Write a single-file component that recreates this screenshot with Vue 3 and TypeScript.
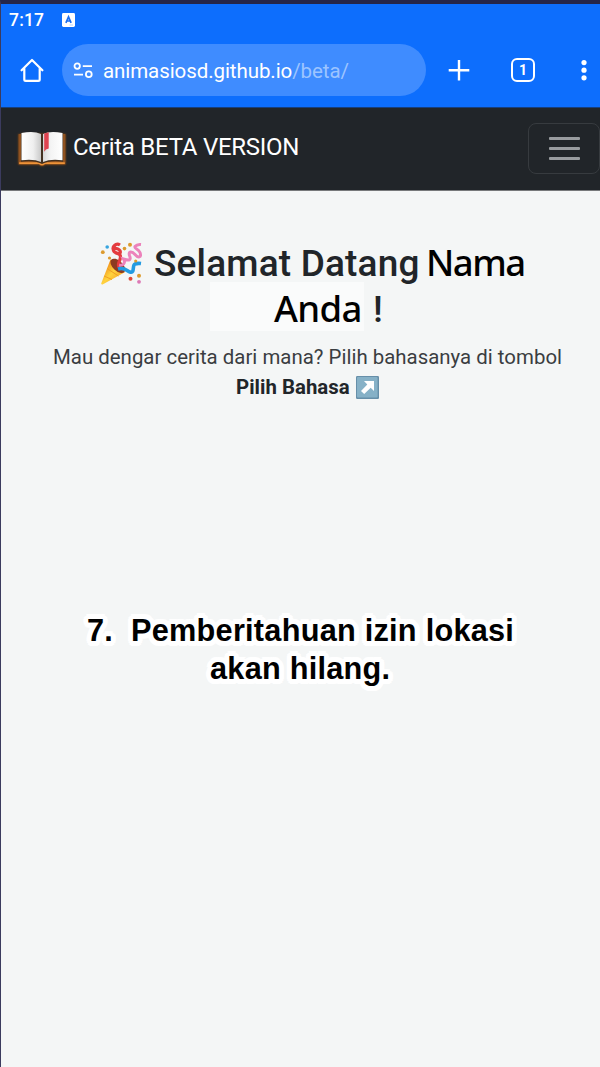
<script setup lang="ts">
interface Caption {
  marker: string
  first: string
  second: string
}

const clock = '7:17'
const host = 'animasiosd.github.io'
const path = '/beta/'
const tabCount = 1
const caption: Caption = {
  marker: '7.',
  first: 'Pemberitahuan izin lokasi',
  second: 'akan hilang.',
}
</script>

<template>
  <div class="screen">
    <header class="browser">
      <div class="status">
        <span class="clock">{{ clock }}</span>
        <svg class="status-icon" viewBox="0 0 13 14">
          <rect width="13" height="14" rx="1.4" fill="#fff" />
          <path d="M3.9 9.8 6.5 3.8 9.1 9.8M4.8 8h3.4" fill="none" stroke="#1d6ff0" stroke-width="1.7" />
          <path d="M7.5 12h3.5" stroke="#b9d3fb" stroke-width="1" />
        </svg>
      </div>
      <div class="toolbar">
        <svg class="home" viewBox="0 0 24 24" fill="none" stroke="#fff" stroke-width="2.2" stroke-linejoin="round" stroke-linecap="round">
          <path d="M1.6 12.3 12 2 22.4 12.3M4.3 10.2V21.4a1.4 1.4 0 0 0 1.4 1.4H18.3A1.4 1.4 0 0 0 19.7 21.4V10.2" />
        </svg>
        <div class="address">
          <svg class="tune" viewBox="0 0 20 17" fill="none" stroke="#fff" stroke-width="1.8">
            <circle cx="4.2" cy="4.1" r="2.7" />
            <path d="M9.8 4.1H19M1 12.6H10" />
            <circle cx="15.8" cy="12.3" r="2.9" />
          </svg>
          <span class="url">{{ host }}<span class="path">{{ path }}</span></span>
        </div>
        <svg class="plus" viewBox="0 0 22 22" stroke="#fff" stroke-width="2.4">
          <path d="M11 1V21.6M.7 11.3H21.3" />
        </svg>
        <span class="tabs">{{ tabCount }}</span>
        <svg class="dots" viewBox="0 0 6 22" fill="#fff">
          <circle cx="3" cy="3.6" r="2.6" />
          <circle cx="3" cy="11.2" r="2.6" />
          <circle cx="3" cy="18.8" r="2.6" />
        </svg>
      </div>
    </header>

    <nav class="navbar">
      <svg class="book" viewBox="0 0 52 40">
        <defs>
          <linearGradient id="leftPage" x1="0" x2="1">
            <stop offset="0" stop-color="#fff" />
            <stop offset=".6" stop-color="#efefef" />
            <stop offset="1" stop-color="#c9c9c9" />
          </linearGradient>
          <linearGradient id="rightPage" x1="0" x2="1">
            <stop offset="0" stop-color="#d8d8d8" />
            <stop offset=".4" stop-color="#f4f4f4" />
            <stop offset="1" stop-color="#fff" />
          </linearGradient>
        </defs>
        <path class="cover" d="M2.6 5H49.4V35.5H29Q26 38.5 23 35.5H2.6Z" fill="#8f5220" />
        <path d="M3.2 33.2H22.5Q26 34.2 29.5 33.2H48.8V35H29Q26 37.5 23 35H3.2Z" fill="#ee9338" />
        <path d="M5 4.5H47V32.7Q34 30.8 26 35Q18 30.8 5 32.7Z" fill="#43301f" />
        <path d="M5.5 4Q18 1.6 25 5V33Q18 29.6 5.5 31.2Z" fill="url(#leftPage)" />
        <path d="M27 5Q34 1.6 46.5 4V31.2Q34 29.6 27 33Z" fill="url(#rightPage)" />
        <path d="M28.2 4.4 32.7 3.2V19.5L30 20.4 28.2 22.8Z" fill="#df4450" />
      </svg>
      <span class="brand">Cerita BETA VERSION</span>
      <button class="toggler" type="button" aria-label="Menu">
        <span></span><span></span><span></span>
      </button>
    </nav>

    <main class="content">
      <h1 class="title">
        <span class="title-line">
          <svg class="party" viewBox="0 0 44 44">
            <defs>
              <linearGradient id="cone" x1="0" x2="1" y1="0" y2="1">
                <stop offset=".2" stop-color="#f08d18" />
                <stop offset=".5" stop-color="#ffd33e" />
                <stop offset=".9" stop-color="#f79a20" />
              </linearGradient>
            </defs>
            <path d="M2.2 41.6 11.5 17.5Q22 21 25.8 30.3L4 42.3Q2.4 43 2.2 41.6Z" fill="url(#cone)" />
            <path d="M5 34 13 37.5M8 26.5 19.5 34" stroke="#f0a024" stroke-width="1" fill="none" />
            <ellipse cx="18.8" cy="23.8" rx="9" ry="5" transform="rotate(43 18.8 23.8)" fill="#8c3b21" />
            <path d="M20 25C18 21 21 20 21.5 15C22 10 14 12 14.5 8C15 4 23 8 21 11C18 14 11 7 15.5 3.5Q18 1 21 3" fill="none" stroke="#e43b3f" stroke-width="3.2" />
            <path d="M20 23C24 24 27 21 24.5 17C28 18 33 20 30.5 13.5C29 9 33 9 36 12.5C39 16 43 16 41 10.5C39 6 35 7 36 4.5Q38 2 42 2.5" fill="none" stroke="#ec82bb" stroke-width="3" />
            <path d="M19 27C26 25 28 29 31 30C36 32 33 23 36 22Q38.5 21 42 21.5" fill="none" stroke="#239be1" stroke-width="3.6" />
            <g fill="#dc9a2d">
              <circle cx="3.8" cy="10.2" r="1.9" />
              <circle cx="10.5" cy="16" r="1.6" />
              <circle cx="25.5" cy="6.6" r="1.8" />
              <circle cx="31" cy="2.8" r="2" />
              <circle cx="36.7" cy="19" r="1.6" />
              <circle cx="40" cy="33.7" r="2" />
            </g>
            <circle cx="31.5" cy="36.8" r="2" fill="#df4a38" />
            <circle cx="8.2" cy="5" r="1.8" fill="#37a5df" />
            <circle cx="40" cy="39.8" r="1.9" fill="#dd79b5" />
          </svg>
          <span class="greet">Selamat Datang</span>
          <span class="name">Nama</span>
        </span>
        <span class="title-line second">
          <span class="patch"><span class="name anda">Anda</span></span>
          <span class="bang">!</span>
        </span>
      </h1>

      <p class="lead">
        <span class="lead-line">Mau dengar cerita dari mana? Pilih bahasanya di tombol</span>
        <span class="lead-line strong">
          <b>Pilih Bahasa</b>
          <svg class="arrow" viewBox="0 0 23 23">
            <rect width="23" height="23" rx="1.2" fill="#668fa9" />
            <rect x="1" y="1" width="20.6" height="20.4" rx="1" fill="#86b1c7" />
            <path d="M8 5H18V15L14.7 11.8 8.2 18 5 14.9 11.3 8.4Z" fill="#fff" />
          </svg>
        </span>
      </p>
    </main>

    <div class="caption">
      <div class="caption-first"><span class="marker">{{ caption.marker }}</span><span>{{ caption.first }}</span></div>
      <div class="caption-second">{{ caption.second }}</div>
    </div>
  </div>
</template>

<style>
body {
  margin: 0;
  background: #f4f6f6;
}
</style>

<style scoped>
* {
  box-sizing: border-box;
}
.screen {
  width: 600px;
  height: 1067px;
  overflow: hidden;
  border-top: 4px solid #25264a;
  border-left: 1px solid #3b3b5e;
  background: #f4f6f6;
  font-family: Roboto, sans-serif;
  color: #212529;
}
svg {
  display: block;
  flex: none;
}
.browser {
  height: 104px;
  background: #0d6efd;
  border-bottom: 1px solid #173f7c;
  color: #fff;
}
.status {
  display: flex;
  align-items: center;
  height: 32px;
  padding-left: 8px;
}
.clock {
  width: 53px;
  font-size: 17.5px;
  font-weight: 500;
  line-height: 32px;
  letter-spacing: 0.2px;
}
.status-icon {
  width: 13px;
  height: 14px;
}
.toolbar {
  display: flex;
  align-items: center;
  height: 52px;
  margin-top: 8px;
  padding-left: 19px;
}
.home {
  width: 24px;
  height: 24px;
}
.address {
  display: flex;
  align-items: center;
  width: 364px;
  height: 52px;
  margin-left: 18px;
  padding-left: 11px;
  border-radius: 26px;
  background: #3f8cff;
}
.tune {
  width: 20px;
  height: 17px;
}
.url {
  margin-left: 10px;
  padding-top: 2px;
  font-size: 20.5px;
  line-height: 50px;
  letter-spacing: -0.08px;
  white-space: nowrap;
}
.path {
  color: #9cc4ff;
}
.plus {
  width: 22px;
  height: 22px;
  margin-left: 22px;
}
.tabs {
  width: 24px;
  height: 24px;
  margin-left: 41px;
  border: 2px solid #fff;
  border-radius: 6px;
  font-size: 14px;
  font-weight: 700;
  line-height: 21px;
  text-align: center;
}
.dots {
  width: 6px;
  height: 22px;
  margin-left: 46px;
}
.navbar {
  display: flex;
  align-items: center;
  height: 83px;
  padding-left: 15px;
  background: #212529;
  border-bottom: 1px solid #77797b;
}
.book {
  width: 52px;
  height: 40px;
}
.cover {
  filter: drop-shadow(0 0 1px #8a4b12);
}
.brand {
  flex: none;
  width: 460px;
  padding-left: 5px;
  margin-top: -4px;
  font-size: 24px;
  letter-spacing: -0.26px;
  color: #fff;
  white-space: nowrap;
}
.toggler {
  display: flex;
  flex-direction: column;
  align-items: center;
  justify-content: center;
  gap: 7px;
  flex: none;
  width: 72px;
  height: 51px;
  margin-top: -2px;
  padding: 0;
  border: 1px solid #373b3f;
  border-radius: 8px;
  background: none;
}
.toggler span {
  width: 31px;
  height: 3px;
  border-radius: 1px;
  background: #999c9f;
}
.content {
  padding-top: 50px;
}
.title {
  margin: 0;
  font-size: 37px;
  font-weight: 500;
}
.title-line {
  display: flex;
  align-items: baseline;
  height: 46px;
  line-height: 46px;
  padding-left: 98px;
  white-space: nowrap;
}
.party {
  width: 44px;
  height: 44px;
  align-self: center;
}
.greet {
  width: 272px;
  margin-left: 11px;
  letter-spacing: 0.17px;
}
.name {
  font-family: "Noto Sans", "Open Sans", sans-serif;
  font-size: 36.5px;
  font-weight: 500;
  line-height: 42px;
  letter-spacing: -1.5px;
  color: #000;
}
.anda {
  letter-spacing: -0.6px;
}
.second {
  padding-left: 209px;
}
.patch {
  position: relative;
  z-index: 0;
  width: 154px;
  padding-left: 64px;
}
.patch::before {
  content: "";
  position: absolute;
  z-index: -1;
  inset: -5px 0 auto;
  height: 49px;
  background: #fafbfb;
}
.bang {
  margin-left: 9px;
}
.lead {
  margin: 9px 0 0;
  font-size: 20.4px;
  line-height: 30px;
  letter-spacing: 0.02px;
  color: #3a3d41;
}
.lead-line {
  display: flex;
  align-items: center;
  height: 30px;
  padding-left: 52px;
  white-space: nowrap;
}
.strong {
  padding-left: 235px;
  color: #212529;
}
.arrow {
  width: 23px;
  height: 23px;
  margin-left: 6px;
}
.caption {
  margin-top: 210px;
  font-family: "Liberation Sans", Arial, sans-serif;
  font-size: 30.7px;
  font-weight: 700;
  line-height: 38px;
  letter-spacing: 0.25px;
  color: #000;
  white-space: nowrap;
  text-shadow:
    5px 0 #fff, 4.6px 1.9px #fff, 3.5px 3.5px #fff, 1.9px 4.6px #fff,
    0 5px #fff, -1.9px 4.6px #fff, -3.5px 3.5px #fff, -4.6px 1.9px #fff,
    -5px 0 #fff, -4.6px -1.9px #fff, -3.5px -3.5px #fff, -1.9px -4.6px #fff,
    0 -5px #fff, 1.9px -4.6px #fff, 3.5px -3.5px #fff, 4.6px -1.9px #fff,
    2px 0 #fff, -2px 0 #fff, 0 2px #fff, 0 -2px #fff;
}
.caption-first {
  display: flex;
  padding-left: 86px;
}
.marker {
  width: 44px;
}
.caption-second {
  padding-left: 209px;
}
</style>
